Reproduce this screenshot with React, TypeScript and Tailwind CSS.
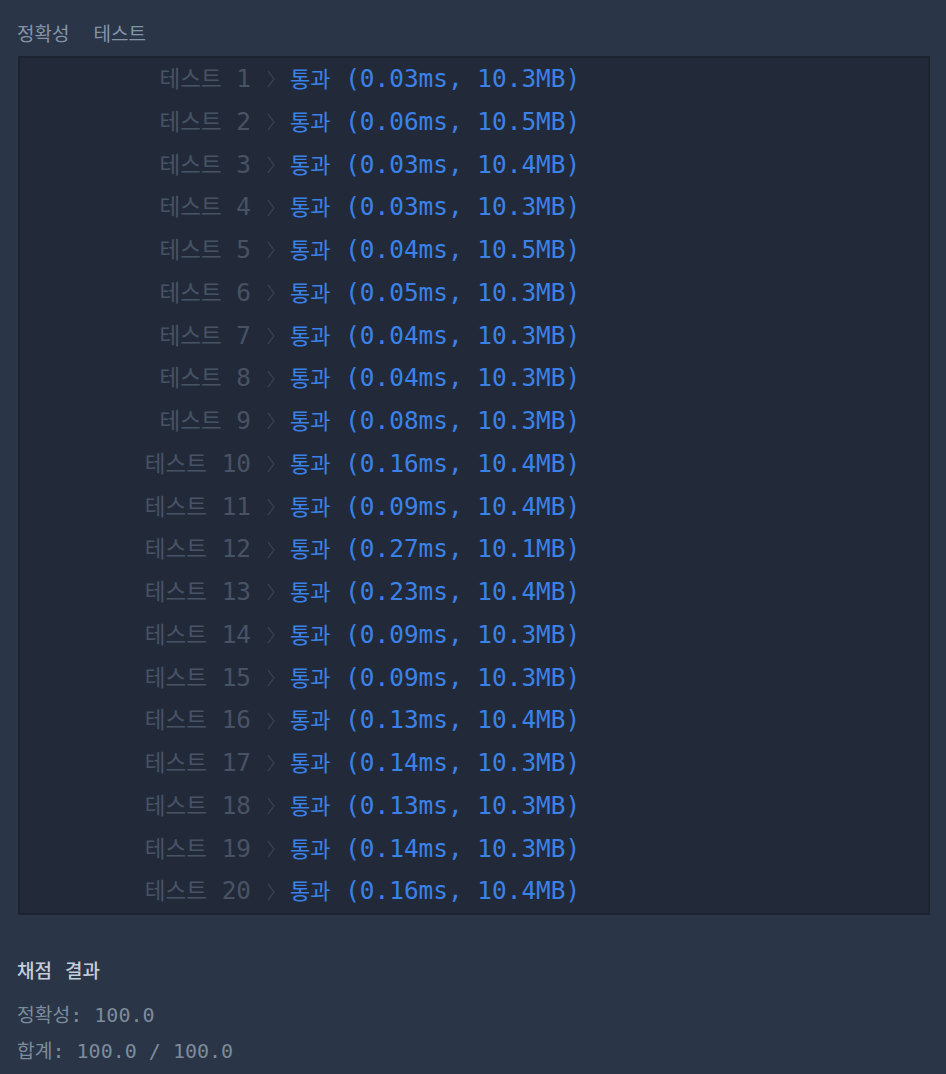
import React from "react";

const rows: [number, string, string][] = [
  [1, "0.03", "10.3"],
  [2, "0.06", "10.5"],
  [3, "0.03", "10.4"],
  [4, "0.03", "10.3"],
  [5, "0.04", "10.5"],
  [6, "0.05", "10.3"],
  [7, "0.04", "10.3"],
  [8, "0.04", "10.3"],
  [9, "0.08", "10.3"],
  [10, "0.16", "10.4"],
  [11, "0.09", "10.4"],
  [12, "0.27", "10.1"],
  [13, "0.23", "10.4"],
  [14, "0.09", "10.3"],
  [15, "0.09", "10.3"],
  [16, "0.13", "10.4"],
  [17, "0.14", "10.3"],
  [18, "0.13", "10.3"],
  [19, "0.14", "10.3"],
  [20, "0.16", "10.4"],
];

const mono = "font-['DejaVu_Sans_Mono','Noto_Sans_CJK_KR',monospace]";
const kr = "font-['Noto_Sans_CJK_KR',sans-serif]";

export default function App() {
  return (
    <div className={`min-h-[1074px] w-[946px] bg-[#2a3547] ${kr}`}>
      <div className="flex h-[56px] items-center gap-[24px] px-[17px] pt-[10px] text-[19px] text-[#8494a7]">
        <span>정확성</span>
        <span>테스트</span>
      </div>
      <div className={`mx-[18px] w-[912px] border-2 border-[#1c2331] bg-[#222a3a] ${mono}`}>
        {rows.map(([n, t, m]) => (
          <div key={n} className="flex h-[42.75px] items-center text-[24.4px]">
            <span className="w-[231px] text-right text-[#475365]">
              <span className={`${kr} text-[22.5px]`}>테스트</span> {n}
            </span>
            <span className="flex w-[39px] justify-center">
              <svg width="10" height="20" viewBox="0 0 10 20" fill="none">
                <path d="M2 2 L8 10 L2 18" stroke="#37414f" strokeWidth="1.3" />
              </svg>
            </span>
            <span className="text-[#3b82e8]">
              <span className={`${kr} text-[22px]`}>통과</span> ({t}ms, {m}MB)
            </span>
          </div>
        ))}
      </div>
      <div className="px-[17px] pt-[41px]">
        <div className="flex items-center text-[19px] font-medium text-[#c5ced8]">
          <span>채점</span>
          <span className="w-[13px]" />
          <span>결과</span>
        </div>
        <div className={`mt-[15px] text-[20px] text-[#7c8c9c] ${mono}`}>
          <span className={`${kr} text-[19.3px]`}>정확성</span>: 100.0
        </div>
        <div className={`mt-[6px] text-[20px] text-[#7c8c9c] ${mono}`}>
          <span className={`${kr} text-[19.3px]`}>합계</span>: 100.0 / 100.0
        </div>
      </div>
    </div>
  );
}
